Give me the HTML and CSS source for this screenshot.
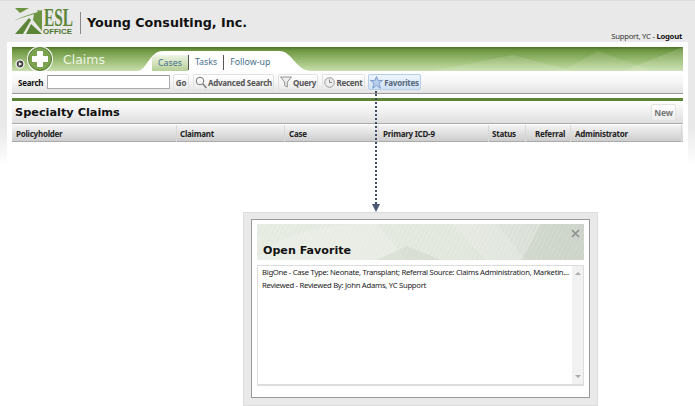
FILE: index.html

```html
<!DOCTYPE html>
<html lang="en">
<head>
  <meta charset="UTF-8" />
  <title>Claims - ESL Office</title>
  <link rel="stylesheet" href="styles.css">
</head>
<body>
  <div class="shell">
    <header class="top">
      <svg class="logo" width="60" height="30" viewBox="0 0 60 30">
        <path d="M1 1h14L6 6z" fill="#6d9440"/>
        <path d="M0 14C9 9 17 7 24 5L23 3L28 4L25 8L24.500 6C17 8 9 10 0 14z" fill="#6d9440"/>
        <path d="M1 27L15 11L17 13L9 27z" fill="#5c8537"/>
        <path d="M12 27L17 17L28 27z" fill="#5c8537"/>
        <path d="M20 7L28 3L28 24L19 13z" fill="#6d9440"/>
        <text class="logo-esl" x="30" y="19" textLength="29" lengthAdjust="spacingAndGlyphs">ESL</text>
        <text class="logo-office" x="29" y="27" textLength="29" lengthAdjust="spacingAndGlyphs">OFFICE</text>
      </svg>
      <span class="company">Young Consulting, Inc.</span>
      <span class="user">Support, YC - <b>Logout</b></span>
    </header>

    <main class="app">
      <div class="band">
        <svg class="facets" viewBox="0 0 670 24" preserveAspectRatio="none">
          <path d="M420 24L500 8L560 24z" fill="#fff" opacity=".12"/>
          <path d="M550 24L585 4L640 24z" fill="#fff" opacity=".1"/>
          <path d="M610 24L670 0L670 24z" fill="#fff" opacity=".14"/>
        </svg>
        <svg class="play" width="10" height="10" viewBox="0 0 10 10">
          <circle cx="5" cy="5" r="4" fill="#444" stroke="#fff" stroke-width="1.2"/>
          <path d="M3.800 3L7 5L3.800 7z" fill="#fff"/>
        </svg>
        <svg class="plus" width="28" height="28" viewBox="0 0 28 28">
          <circle cx="14" cy="14" r="13" fill="#fff"/>
          <circle cx="14" cy="14" r="11.600" fill="#7ba24c" stroke="#466c24" stroke-width=".8"/>
          <path d="M11 6h6v5h5v6h-5v5h-6v-5H6v-6h5z" fill="#fff"/>
        </svg>
        <span class="band-title">Claims</span>
        <nav class="tabs">
          <a class="tab active">Cases</a>
          <a class="tab">Tasks</a>
          <a class="tab">Follow-up</a>
        </nav>
      </div>

      <div class="toolbar">
        <label class="search-label" for="q">Search</label>
        <input id="q" class="search-input">
        <button class="btn btn-go">Go</button>
        <button class="btn btn-adv">
          <svg width="12" height="13" viewBox="0 0 12 13"><circle cx="5" cy="5" r="3.800" fill="none" stroke="#777" stroke-width="1"/><path d="M8 8l3.400 4" stroke="#777" stroke-width="1.400"/></svg>
          Advanced Search
        </button>
        <button class="btn btn-query">
          <svg width="12" height="12" viewBox="0 0 12 12"><path d="M.5 1h11L7.300 6v5L4.700 9.500V6z" fill="#eee" stroke="#888" stroke-width=".9"/></svg>
          Query
        </button>
        <button class="btn btn-recent">
          <svg width="11" height="11" viewBox="0 0 11 11"><circle cx="5.500" cy="5.500" r="4.800" fill="#eee" stroke="#999"/><path d="M5.500 2.500v3h2.500" fill="none" stroke="#888"/></svg>
          Recent
        </button>
        <button class="btn btn-fav">
          <svg width="13" height="13" viewBox="0 0 13 13"><path d="M6.500.5l1.700 4h4.300L9 7.300l1.300 5-3.800-2.800-3.800 2.800L4 7.300.5 4.500h4.300z" fill="#b9cfee" stroke="#6d8fc4" stroke-width=".8"/></svg>
          Favorites
        </button>
      </div>

      <div class="section">
        <h2>Specialty Claims</h2>
        <button class="btn btn-new">New</button>
      </div>

      <div class="thead">
        <span class="th c1">Policyholder</span>
        <span class="th c2">Claimant</span>
        <span class="th c3">Case</span>
        <span class="th c4">Primary ICD-9</span>
        <span class="th c5">Status</span>
        <span class="th c6">Referral</span>
        <span class="th c7">Administrator</span>
      </div>
    </main>
  </div>

  <!-- dotted pointer from Favorites down to the dialog -->
  <div class="pointer"></div>

  <div class="dialog">
    <div class="dialog-inner">
      <div class="dialog-head">
        <svg class="facets" viewBox="0 0 328 36" preserveAspectRatio="none">
          <path d="M0 36C20 8 70 0 120 0L150 36z" fill="#fff" opacity=".15"/>
          <path d="M120 36L150 22L185 36z" fill="#8a9a80" opacity=".12"/>
          <path d="M195 0L240 0L270 36L230 36z" fill="#fff" opacity=".14"/>
          <path d="M265 36L285 0L328 0L328 36z" fill="#8a9a80" opacity=".12"/>
        </svg>
        <h3>Open Favorite</h3>
        <svg class="close" width="9" height="9" viewBox="0 0 9 9"><path d="M1 1l7 7M8 1L1 8" stroke="#8f8f8f" stroke-width="1.600"/></svg>
      </div>
      <div class="fav-box">
        <ul class="fav-list">
          <li>BigOne - Case Type: Neonate, Transplant; Referral Source: Claims Administration, Marketin...</li>
          <li>Reviewed - Reviewed By: John Adams, YC Support</li>
        </ul>
        <div class="scroll">
          <span class="arrow-up"></span>
          <span class="arrow-down"></span>
        </div>
      </div>
    </div>
  </div>
</body>
</html>
```

FILE: styles.css

```css
html,body{margin:0;padding:0;}
body{width:695px;height:406px;overflow:hidden;position:relative;background:#fff;font-family:"Noto Sans",sans-serif;font-size:8px;letter-spacing:-.25px;color:#111;}

/* Shell */
.shell{height:165px;padding:0 7px 0 7px;box-sizing:border-box;border-top:1px solid #ddd;background:linear-gradient(#e9e9e9 0,#e9e9e9 125px,#fff 165px);}
.top{height:41px;display:flex;align-items:flex-start;position:relative;}
.logo{margin:6px 0 0 7px;overflow:visible;}
.logo-esl{font-family:"Liberation Serif",serif;font-weight:700;font-size:26px;letter-spacing:0;fill:#5c8537;}
.logo-office{font-family:"Liberation Sans",sans-serif;font-weight:700;font-size:7px;letter-spacing:0;fill:#4f7530;}
.company{margin:11px 0 0 6px;padding-left:6px;height:22px;line-height:22px;border-left:1px solid #888;font-family:"DejaVu Sans",sans-serif;font-size:12.7px;letter-spacing:0;font-weight:700;color:#111;}
.user{margin:30px 0 0 auto;padding-right:6px;font-size:7.7px;line-height:10px;color:#333;}
.user b{color:#111;}

/* App panel */
.app{background:#fff;padding:5px 5px 0;height:124px;box-sizing:border-box;}
.band{height:24px;display:flex;align-items:center;position:relative;background:linear-gradient(#4c7029 0,#6c9640 3px,#a5c580 16px,#c9dfae 24px);}
.facets{position:absolute;inset:0;width:100%;height:100%;}
.play{position:absolute;left:3px;top:12px;z-index:2;}
.plus{position:absolute;left:14px;top:-2px;z-index:1;}
.band-title{position:relative;margin-left:51px;margin-top:1px;font-family:"DejaVu Sans",sans-serif;font-size:12.5px;letter-spacing:0;color:#eef5e2;width:74px;}
.tabs{position:relative;align-self:stretch;display:flex;align-items:flex-end;width:175px;padding-left:15px;box-sizing:border-box;background:#fff;clip-path:path("M0 24C10 24 12 4 26 4L142 4C156 4 158 24 175 24Z");}
.tab{font-size:8.8px;letter-spacing:0;line-height:15px;height:15px;padding:0 6px;color:#47708c;border-left:1px solid #555;margin-bottom:1px;}
.tab.active{border-left:none;padding:0 6px;margin-bottom:0;height:16px;line-height:16px;background:linear-gradient(#eef5e4,#b5cf96);}

/* Toolbar */
.toolbar{height:23px;display:flex;align-items:center;gap:4px;padding-left:6px;box-sizing:border-box;background:linear-gradient(#fff,#f6f6f6 50%,#e2e2e2);border-bottom:1px solid #999;}
.search-label{font-weight:700;font-size:8px;width:25px;}
.search-input{width:123px;height:14px;box-sizing:border-box;border:1px solid #aaa;border-top-color:#999;background:#fff;margin:0 -1px 0 0;padding:0;}
.btn{height:16px;padding:0;display:inline-flex;align-items:center;justify-content:center;gap:1px;box-sizing:border-box;border:1px solid #e2e2e2;border-radius:2px;background:linear-gradient(#fff,#ececec);font-family:inherit;font-size:8px;letter-spacing:-.25px;font-weight:700;color:#555;white-space:nowrap;}
.btn svg{flex:none;}
.btn-go{width:16px;}
.btn-adv{width:81px;}
.btn-query{width:40px;}
.btn-recent{width:43px;}
.btn-fav{width:53px;background:linear-gradient(#eef5fd,#cfe0f5);border-color:#b7cfe9;color:#54657c;margin-left:-1px;}

/* Section heading */
.section{margin-top:4px;height:26px;box-sizing:border-box;display:flex;align-items:center;justify-content:space-between;padding:0 7px 0 3px;border-top:3px solid #5c8537;border-bottom:1px solid #aaa;background:linear-gradient(#fff,#dfdfdf);}
.section h2{margin:1px 0 0;font-family:"DejaVu Sans",sans-serif;font-size:11.3px;letter-spacing:0;font-weight:700;color:#111;}
.btn-new{width:25px;height:17px;color:#777;font-size:8.500px;}

/* Table head */
.thead{margin-top:1px;height:17px;display:grid;grid-template-columns:165px 108px 94px 110px 37px 45px 111px;background:linear-gradient(#f4f4f4,#cdcdcd);border-bottom:1px solid #aaa;box-sizing:border-box;}
.th{font-size:8px;font-weight:700;line-height:17px;padding-left:4px;border-right:1px solid #d8d8d8;color:#222;white-space:nowrap;}
.c2{padding-left:3px;}
.c5{padding-left:3px;}
.c6{padding-left:9px;}

/* Pointer, on top of the page */
.pointer{position:absolute;left:375px;top:91px;height:113px;border-left:2px dotted #3f4d66;}
.pointer::after{content:"";position:absolute;left:-5px;bottom:-8px;border-left:4px solid transparent;border-right:4px solid transparent;border-top:8px solid #4b5a73;}

/* Dialog */
.dialog{position:absolute;left:243px;top:212px;width:355px;height:194px;box-sizing:border-box;padding:6px 7px 7px;background:#e9e9e9;border:1px solid #ddd;}
.dialog-inner{height:100%;box-sizing:border-box;padding:4px 5px 11px;background:#fff;border:1px solid #999;display:flex;flex-direction:column;gap:5px;}
.dialog-head{height:36px;position:relative;flex:none;background:repeating-linear-gradient(115deg,transparent 0 3px,rgba(255,255,255,.18) 3px 4px),linear-gradient(90deg,#e6ebe2,#e2e7de 60%,#d5dbd2);}
.dialog-head h3{position:absolute;left:6px;bottom:3px;margin:0;font-family:"DejaVu Sans",sans-serif;font-size:11.1px;letter-spacing:0;font-weight:700;color:#111;}
.close{position:absolute;right:4px;top:5px;}
.fav-box{flex:1;min-height:0;display:flex;border:1px solid #ddd;border-bottom-width:2px;}
.fav-list{flex:1;min-width:0;list-style:none;margin:0;padding:0 0 0 4px;font-size:7.7px;letter-spacing:-.28px;line-height:13px;color:#222;white-space:nowrap;}
.scroll{width:11px;flex:none;background:#f1f1f1;display:flex;flex-direction:column;justify-content:space-between;align-items:center;padding:6px 0;box-sizing:border-box;}
.arrow-up{border-left:3px solid transparent;border-right:3px solid transparent;border-bottom:3px solid #aaa;}
.arrow-down{border-left:3px solid transparent;border-right:3px solid transparent;border-top:3px solid #aaa;}
```
